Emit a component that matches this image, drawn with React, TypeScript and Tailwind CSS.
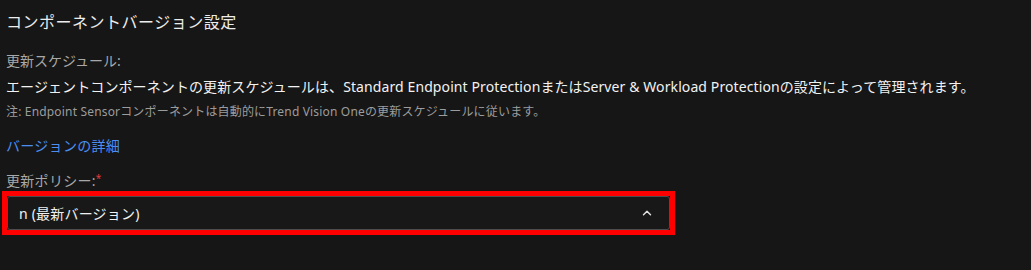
import { ChevronUp } from 'lucide-react'

const font = '[font-family:"Segoe_UI","Noto_Sans","Noto_Sans_CJK_JP",sans-serif]'

export default function App() {
	return (
		<div className={`min-h-[270px] w-full bg-[#161616] pl-[6px] pt-[10px] text-[#e8e8e8] ${font}`}>
			<h2 className="text-[16px] leading-[24px] tracking-[0.5px] text-[#ececec]">コンポーネントバージョン設定</h2>

			<div className="mt-[17px] text-[14px] leading-[20px] text-[#a8a8a8]">更新スケジュール:</div>
			<div className="mt-[6px] text-[14px] leading-[20px] tracking-[0.1px] text-[#f2f2f2]">
				エージェントコンポーネントの更新スケジュールは、Standard Endpoint ProtectionまたはServer &amp; Workload
				Protectionの設定によって管理されます。
			</div>
			<div className="mt-[6px] text-[12px] leading-[18px] tracking-[0.17px] text-[#9c9c9c]">
				注: Endpoint Sensorコンポーネントは自動的にTrend Vision Oneの更新スケジュールに従います。
			</div>

			<a className="mt-[15px] block w-fit text-[14px] leading-[20px] tracking-[0.3px] text-[#4c8ef2]" href="#">
				バージョンの詳細
			</a>

			<div className="mt-[15px] flex text-[14px] leading-[20px] tracking-[0.3px] text-[#a8a8a8]">
				更新ポリシー:
				<span className="-mt-[3px] text-[10px] text-[#e0393e]">*</span>
			</div>

			{/* highlighted select */}
			<div className="-ml-[4px] w-[673px] border-[5px] border-[#ff0000]">
				<div className="flex h-[34px] items-center justify-between rounded-[3px] border border-[#4d4d4d] bg-[#181818] pl-[11px] pr-[15px]">
					<span className="text-[14px] tracking-[0.2px] text-[#f0f0f0]">n (最新バージョン)</span>
					<ChevronUp size={14} strokeWidth={2.5} className="text-[#e0e0e0]" />
				</div>
			</div>
		</div>
	)
}
